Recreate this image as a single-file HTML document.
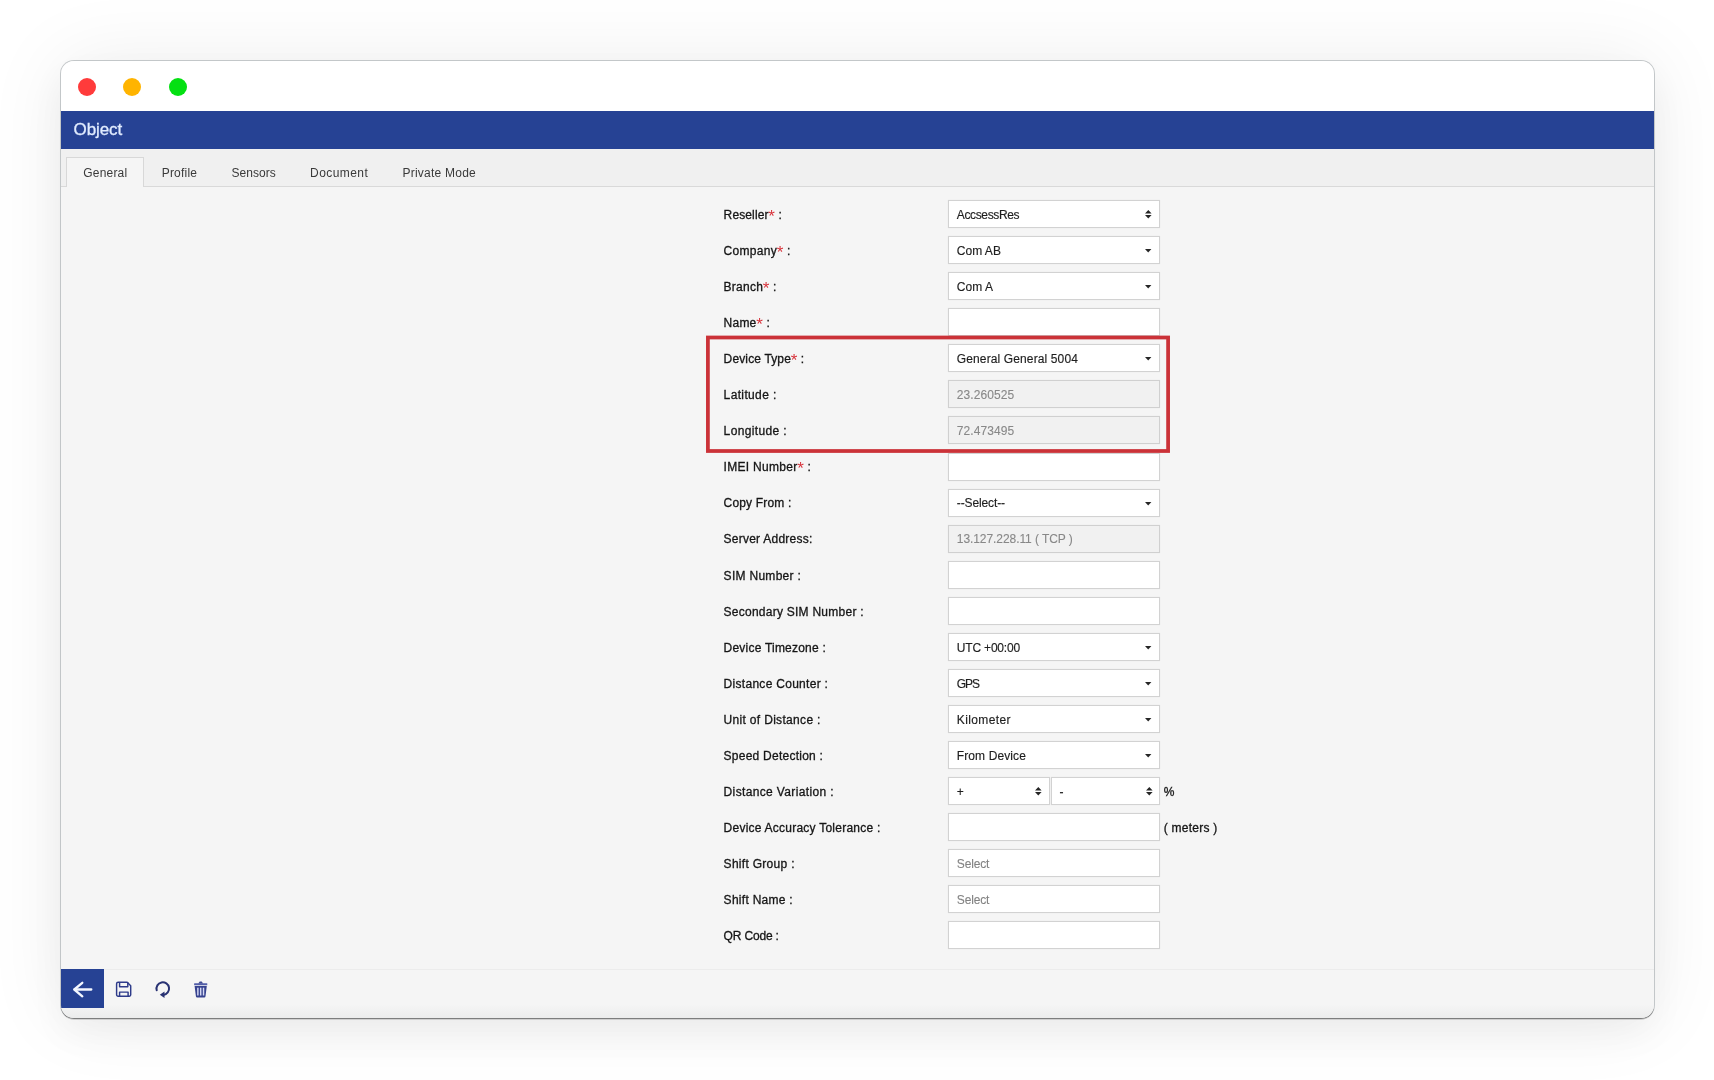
<!DOCTYPE html>
<html lang="en"><head><meta charset="utf-8"><title>Object</title>
<style>
html,body{margin:0;padding:0}
body{width:1714px;height:1080px;background:#fff;position:relative;overflow:hidden;font-family:"Liberation Sans",sans-serif;font-size:12px;color:#1c1c1c}
.win{position:absolute;left:61px;top:61px;width:1593px;height:957.3px;border-radius:13px;background:#f5f5f5;box-shadow:0 1px 0 0 rgba(110,110,110,.75),0 1.8px 0 0 rgba(120,120,120,.35),0 0 0 1px rgba(186,190,193,.85),0 16px 36px rgba(0,0,0,.045),0 0 80px rgba(0,0,0,.075);overflow:hidden}
.in{position:absolute;left:-1px;top:-1px;width:1595px;height:960px;will-change:transform}
.titlebar{position:absolute;left:0;top:0;width:100%;height:51px;background:#fff}
.dot{position:absolute;top:17.6px;width:18px;height:18px;border-radius:50%}
.hdr{position:absolute;left:0;top:51px;width:100%;height:38px;background:#264294}
.hdr span{position:absolute;left:13.6px;top:8.5px;font-size:17px;line-height:20px;color:#e1ecff;white-space:pre;letter-spacing:-0.12px;-webkit-text-stroke:0.3px #e1ecff}
.tabbar{position:absolute;left:0;top:89px;width:100%;height:36.5px;background:#f0f0f0;border-bottom:1px solid #d9d9d9;box-sizing:content-box}
.tabon{position:absolute;left:6px;top:96.5px;width:77.5px;height:30px;background:#f5f5f5;border:1px solid #d8d8d8;border-bottom:none;box-sizing:border-box}
.tab{position:absolute;top:104.5px;line-height:16px;font-size:12px;color:#3a3a3a;white-space:pre}
.lbl{position:absolute;white-space:pre;line-height:16px;color:#151515;-webkit-text-stroke:0.3px #151515}
.lbl b{font-weight:normal;-webkit-text-stroke:0;color:#d8343c;font-size:17px;line-height:0;position:relative;top:3.6px;letter-spacing:0;margin-left:-0.3px}
.box{position:absolute;box-sizing:border-box;border:1px solid #d2d2d2;background:#fff;height:28px;box-shadow:0 0 1px rgba(0,0,0,.08)}
.box.dis{background:#f1f1f1;border-color:#d0d0d0}
.val{position:absolute;white-space:pre;line-height:16px;color:#1e1e1e;-webkit-text-stroke:0.15px #1e1e1e}
.val.dis{color:#888;-webkit-text-stroke:0.1px #888}
.val.ph{color:#838383;-webkit-text-stroke:0.1px #838383}
.foot{position:absolute;left:0;top:908.5px;width:100%;height:51px;border-top:1px solid #ececec;background:linear-gradient(#f5f5f5 0,#f5f5f5 68%,#e9eaea 100%)}
.back{position:absolute;left:1px;top:909.4px;width:43px;height:38.7px;background:#264294}
svg{position:absolute;overflow:visible}
</style></head><body>
<div class="win"><div class="in">
<div class="titlebar"></div>
<div class="dot" style="left:17.9px;background:#ff3b3b"></div>
<div class="dot" style="left:63.3px;background:#ffb400"></div>
<div class="dot" style="left:108.8px;background:#04e012"></div>
<div class="hdr"><span>Object</span></div>
<div class="tabbar"></div>
<div class="tabon"></div>
<div class="tab" style="left:23.3px;letter-spacing:0.185px">General</div>
<div class="tab" style="left:101.7px;letter-spacing:0.212px">Profile</div>
<div class="tab" style="left:171.4px;letter-spacing:0.053px">Sensors</div>
<div class="tab" style="left:250.1px;letter-spacing:0.425px">Document</div>
<div class="tab" style="left:342.5px;letter-spacing:0.233px">Private Mode</div>
<div class="lbl" style="left:663.6px;top:146.84px;letter-spacing:0.128px">Reseller<b>*</b> :</div>
<div class="box" style="left:888.0px;top:140.00px;width:212.0px"></div><div class="val" style="left:896.8px;top:146.84px;letter-spacing:-0.363px">AccsessRes</div><svg style="left:1085.2px;top:150.00px" width="6.6" height="8.6" viewBox="0 0 6.6 8.6"><path d="M0 3.5 L3.3 0 L6.6 3.5Z M0 5.1 L3.3 8.6 L6.6 5.1Z" fill="#262626"/></svg>
<div class="lbl" style="left:663.6px;top:182.84px;letter-spacing:0.305px">Company<b>*</b> :</div>
<div class="box" style="left:888.0px;top:176.00px;width:212.0px"></div><div class="val" style="left:896.8px;top:182.84px;letter-spacing:0.014px">Com AB</div><svg style="left:1085.4px;top:188.70px" width="6.4" height="3.6" viewBox="0 0 6.4 3.6"><path d="M0 0 L6.4 0 L3.2 3.6Z" fill="#262626"/></svg>
<div class="lbl" style="left:663.6px;top:218.84px;letter-spacing:0.246px">Branch<b>*</b> :</div>
<div class="box" style="left:888.0px;top:212.00px;width:212.0px"></div><div class="val" style="left:896.8px;top:218.84px;letter-spacing:0.037px">Com A</div><svg style="left:1085.4px;top:224.70px" width="6.4" height="3.6" viewBox="0 0 6.4 3.6"><path d="M0 0 L6.4 0 L3.2 3.6Z" fill="#262626"/></svg>
<div class="lbl" style="left:663.6px;top:254.84px;letter-spacing:0.231px">Name<b>*</b> :</div>
<div class="box" style="left:888.0px;top:248.00px;width:212.0px"></div>
<div class="lbl" style="left:663.6px;top:290.84px;letter-spacing:0.145px">Device Type<b>*</b> :</div>
<div class="box" style="left:888.0px;top:284.00px;width:212.0px"></div><div class="val" style="left:896.8px;top:290.84px;letter-spacing:0.123px">General General 5004</div><svg style="left:1085.4px;top:296.70px" width="6.4" height="3.6" viewBox="0 0 6.4 3.6"><path d="M0 0 L6.4 0 L3.2 3.6Z" fill="#262626"/></svg>
<div class="lbl" style="left:663.6px;top:326.84px;letter-spacing:0.362px">Latitude :</div>
<div class="box dis" style="left:888.0px;top:320.00px;width:212.0px"></div><div class="val dis" style="left:896.8px;top:326.84px;letter-spacing:0.096px">23.260525</div>
<div class="lbl" style="left:663.6px;top:362.84px;letter-spacing:0.364px">Longitude :</div>
<div class="box dis" style="left:888.0px;top:356.00px;width:212.0px"></div><div class="val dis" style="left:896.8px;top:362.84px;letter-spacing:0.096px">72.473495</div>
<div class="lbl" style="left:663.6px;top:398.84px;letter-spacing:0.301px">IMEI Number<b>*</b> :</div>
<div class="box" style="left:888.0px;top:393.00px;width:212.0px"></div>
<div class="lbl" style="left:663.6px;top:434.84px;letter-spacing:0.162px">Copy From :</div>
<div class="box" style="left:888.0px;top:429.00px;width:212.0px"></div><div class="val" style="left:896.8px;top:434.84px;letter-spacing:-0.114px">--Select--</div><svg style="left:1085.4px;top:441.70px" width="6.4" height="3.6" viewBox="0 0 6.4 3.6"><path d="M0 0 L6.4 0 L3.2 3.6Z" fill="#262626"/></svg>
<div class="lbl" style="left:663.6px;top:470.84px;letter-spacing:0.235px">Server Address:</div>
<div class="box dis" style="left:888.0px;top:465.00px;width:212.0px"></div><div class="val dis" style="left:896.8px;top:470.84px;letter-spacing:-0.072px">13.127.228.11 ( TCP )</div>
<div class="lbl" style="left:663.6px;top:507.84px;letter-spacing:0.29px">SIM Number :</div>
<div class="box" style="left:888.0px;top:501.00px;width:212.0px"></div>
<div class="lbl" style="left:663.6px;top:543.84px;letter-spacing:0.249px">Secondary SIM Number :</div>
<div class="box" style="left:888.0px;top:537.00px;width:212.0px"></div>
<div class="lbl" style="left:663.6px;top:579.84px;letter-spacing:0.217px">Device Timezone :</div>
<div class="box" style="left:888.0px;top:573.00px;width:212.0px"></div><div class="val" style="left:896.8px;top:579.84px;letter-spacing:-0.185px">UTC +00:00</div><svg style="left:1085.4px;top:585.70px" width="6.4" height="3.6" viewBox="0 0 6.4 3.6"><path d="M0 0 L6.4 0 L3.2 3.6Z" fill="#262626"/></svg>
<div class="lbl" style="left:663.6px;top:615.84px;letter-spacing:0.289px">Distance Counter :</div>
<div class="box" style="left:888.0px;top:609.00px;width:212.0px"></div><div class="val" style="left:896.8px;top:615.84px;letter-spacing:-1.015px">GPS</div><svg style="left:1085.4px;top:621.70px" width="6.4" height="3.6" viewBox="0 0 6.4 3.6"><path d="M0 0 L6.4 0 L3.2 3.6Z" fill="#262626"/></svg>
<div class="lbl" style="left:663.6px;top:651.84px;letter-spacing:0.318px">Unit of Distance :</div>
<div class="box" style="left:888.0px;top:645.00px;width:212.0px"></div><div class="val" style="left:896.8px;top:651.84px;letter-spacing:0.39px">Kilometer</div><svg style="left:1085.4px;top:657.70px" width="6.4" height="3.6" viewBox="0 0 6.4 3.6"><path d="M0 0 L6.4 0 L3.2 3.6Z" fill="#262626"/></svg>
<div class="lbl" style="left:663.6px;top:687.84px;letter-spacing:0.247px">Speed Detection :</div>
<div class="box" style="left:888.0px;top:681.00px;width:212.0px"></div><div class="val" style="left:896.8px;top:687.84px;letter-spacing:0.108px">From Device</div><svg style="left:1085.4px;top:693.70px" width="6.4" height="3.6" viewBox="0 0 6.4 3.6"><path d="M0 0 L6.4 0 L3.2 3.6Z" fill="#262626"/></svg>
<div class="lbl" style="left:663.6px;top:723.84px;letter-spacing:0.356px">Distance Variation :</div>
<div class="box" style="left:888.0px;top:717.00px;width:101.5px"></div><div class="box" style="left:991.2px;top:717.00px;width:108.8px"></div><div class="val" style="left:896.8px;top:723.84px">+</div><div class="val" style="left:999.5px;top:723.84px">-</div><svg style="left:975.0px;top:727.00px" width="6.6" height="8.6" viewBox="0 0 6.6 8.6"><path d="M0 3.5 L3.3 0 L6.6 3.5Z M0 5.1 L3.3 8.6 L6.6 5.1Z" fill="#262626"/></svg><svg style="left:1085.5px;top:727.00px" width="6.6" height="8.6" viewBox="0 0 6.6 8.6"><path d="M0 3.5 L3.3 0 L6.6 3.5Z M0 5.1 L3.3 8.6 L6.6 5.1Z" fill="#262626"/></svg>
<div class="lbl" style="left:663.6px;top:759.84px;letter-spacing:0.236px">Device Accuracy Tolerance :</div>
<div class="box" style="left:888.0px;top:753.00px;width:212.0px"></div>
<div class="lbl" style="left:663.6px;top:795.84px;letter-spacing:0.294px">Shift Group :</div>
<div class="box" style="left:888.0px;top:789.00px;width:212.0px"></div><div class="val ph" style="left:896.8px;top:795.84px;letter-spacing:-0.16px">Select</div>
<div class="lbl" style="left:663.6px;top:831.84px;letter-spacing:0.281px">Shift Name :</div>
<div class="box" style="left:888.0px;top:825.00px;width:212.0px"></div><div class="val ph" style="left:896.8px;top:831.84px;letter-spacing:-0.16px">Select</div>
<div class="lbl" style="left:663.6px;top:867.84px;letter-spacing:-0.167px">QR Code :</div>
<div class="box" style="left:888.0px;top:861.00px;width:212.0px"></div>
<div class="lbl" style="left:1103.75px;top:723.84px;letter-spacing:-0.472px">%</div>
<div class="lbl" style="left:1103.75px;top:759.84px;letter-spacing:0.241px">( meters )</div>
<svg style="left:0;top:0" width="1594" height="959"><rect x="647.9" y="277.5" width="460.2" height="113.5" fill="none" stroke="#cb3238" stroke-width="3.75"/></svg>
<div class="foot"></div>
<div class="back"></div>

<svg style="left:0;top:0" width="260" height="959" viewBox="60 60 260 959">
<g fill="none" stroke="#f4f8ff" stroke-width="2.3" stroke-linecap="round" stroke-linejoin="round"><path d="M91.3 989.5 H74.6"/><path d="M82.3 982.8 L74.3 989.5 L82.3 996.3"/></g>
<g fill="none" stroke="#2e3b8a" stroke-width="1.45" stroke-linejoin="round"><path d="M118.1 982.3 H127.2 L130.7 985.7 V994.7 A1.5 1.5 0 0 1 129.2 996.2 H118.1 A1.5 1.5 0 0 1 116.6 994.7 V983.8 A1.5 1.5 0 0 1 118.1 982.3 Z"/><path d="M119.6 982.3 V986.7 H127.8 V982.3"/><path d="M119.6 996.2 V992.1 H128.1 V996.2"/></g>
<path d="M156.7 990.3 A6.3 6.3 0 1 1 163.4 994.9" fill="none" stroke="#283273" stroke-width="2" stroke-linecap="round"/>
<path d="M159.8 994.8 L164.5 991.5 L164.5 997.9 Z" fill="#283273"/>
<path d="M194.6 986 H206.8 L205.5 996.2 A1.3 1.3 0 0 1 204.2 997.4 H197.2 A1.3 1.3 0 0 1 195.9 996.2 Z" fill="#36428f"/>
<g fill="#d6d9f4"><rect x="197.15" y="987.7" width="1.45" height="7.8"/><rect x="199.98" y="987.7" width="1.45" height="7.8"/><rect x="202.8" y="987.7" width="1.45" height="7.8"/></g>
<rect x="194.1" y="983.2" width="13.2" height="2" rx=".5" fill="#525da8"/>
<path d="M198.3 983.4 L199.7 981.5 H201.7 L203.1 983.4 Z" fill="#3d4993"/>
</svg>
</div></div>
</body></html>
